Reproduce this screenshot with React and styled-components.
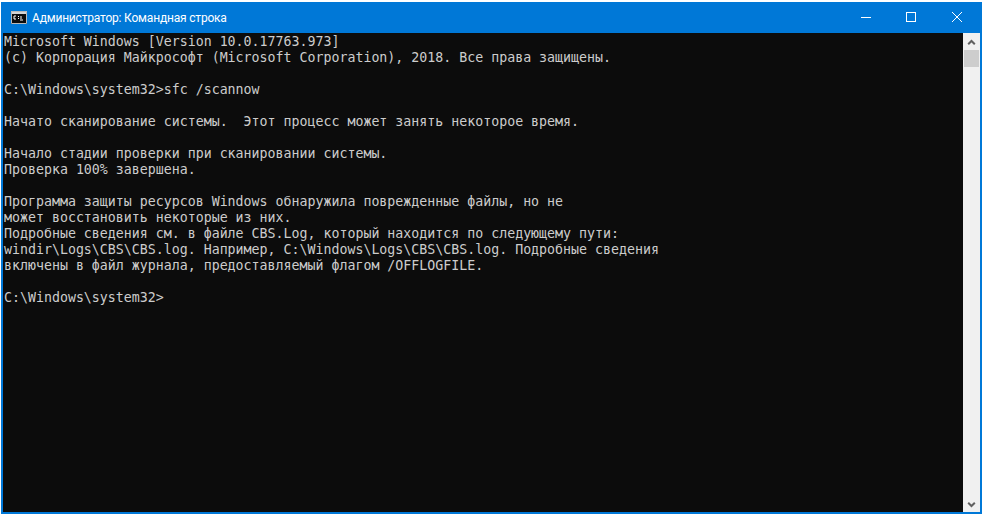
import React from 'react';
import styled, { createGlobalStyle } from 'styled-components';

const GlobalStyle = createGlobalStyle`
  html, body {
    margin: 0;
    padding: 0;
    width: 983px;
    height: 516px;
    overflow: hidden;
    background: #ffffff;
  }
`;

const Page = styled.div`
  width: 983px;
  height: 516px;
  padding: 2px 1px;
  box-sizing: border-box;
  background: #ffffff;
`;

const Window = styled.div`
  height: 100%;
  display: flex;
  flex-direction: column;
  border: 2px solid #0078d7;
  border-top: none;
  box-sizing: border-box;
`;

const TitleBar = styled.div`
  height: 31px;
  flex: none;
  display: flex;
  align-items: center;
  background: #0078d7;
`;

const AppIcon = styled.svg`
  width: 16px;
  height: 13px;
  margin-left: 8px;
  flex: none;
`;

const Title = styled.div`
  margin-left: 5px;
  flex: 1;
  color: #ffffff;
  font: 12px Roboto, "Noto Sans", sans-serif;
  letter-spacing: -0.19px;
`;

const CaptionButton = styled.div`
  width: 46px;
  height: 31px;
  box-sizing: border-box;
  padding: 0 0 1px ${(p) => p.$nudge || 0}px;
  display: flex;
  align-items: center;
  justify-content: center;
`;

const Body = styled.div`
  flex: 1;
  min-height: 0;
  display: flex;
`;

const Console = styled.pre`
  flex: 1;
  margin: 0;
  padding: 1px 0 0 1px;
  background: #0c0c0c;
  color: #cccccc;
  font-family: "DejaVu Sans Mono", monospace;
  font-size: 13.28px;
  line-height: 16px;
  overflow: hidden;
`;

const ScrollBar = styled.div`
  width: 17px;
  flex: none;
  display: flex;
  flex-direction: column;
  background: #f0f0f0;
`;

const ScrollArrow = styled.div`
  height: 17px;
  flex: none;
  box-sizing: border-box;
  padding-top: ${(p) => (p.$down ? 3 : 0)}px;
  display: flex;
  align-items: center;
  justify-content: center;
`;

const ScrollThumb = styled.div`
  height: 17px;
  flex: none;
  margin: 0 1px;
  background: #cdcdcd;
`;

const ScrollTrack = styled.div`
  flex: 1;
`;

const output = `Microsoft Windows [Version 10.0.17763.973]
(c) Корпорация Майкрософт (Microsoft Corporation), 2018. Все права защищены.

C:\\Windows\\system32>sfc /scannow

Начато сканирование системы.  Этот процесс может занять некоторое время.

Начало стадии проверки при сканировании системы.
Проверка 100% завершена.

Программа защиты ресурсов Windows обнаружила поврежденные файлы, но не
может восстановить некоторые из них.
Подробные сведения см. в файле CBS.Log, который находится по следующему пути:
windir\\Logs\\CBS\\CBS.log. Например, C:\\Windows\\Logs\\CBS\\CBS.log. Подробные сведения
включены в файл журнала, предоставляемый флагом /OFFLOGFILE.

C:\\Windows\\system32>`;

const ConsoleIcon = () => (
  <AppIcon viewBox="0 0 16 13">
    <rect x="0" y="0" width="16" height="13" fill="#0c0c0c" />
    <rect x="0" y="0" width="16" height="3" fill="#d4d4d4" />
    <path d="M0.5 0.5h15v12h-15z" fill="none" stroke="#b8b8b8" />
    <path d="M5 5H3v3h2M7 5.5h1M7 7.5h1M9 9h3M10 5v3" fill="none" stroke="#ffffff" />
  </AppIcon>
);

export default function App() {
  return (
    <Page>
      <GlobalStyle />
      <Window>
        <TitleBar>
          <ConsoleIcon />
          <Title>Администратор: Командная строка</Title>
          <CaptionButton $nudge={2}>
            <svg width="10" height="10" viewBox="0 0 10 10">
              <path d="M0 5.5h10" stroke="#fff" />
            </svg>
          </CaptionButton>
          <CaptionButton>
            <svg width="10" height="10" viewBox="0 0 10 10">
              <rect x="0.5" y="0.5" width="9" height="9" fill="none" stroke="#fff" />
            </svg>
          </CaptionButton>
          <CaptionButton>
            <svg width="10" height="10" viewBox="0 0 10 10">
              <path d="M0 0l10 10M10 0L0 10" stroke="#fff" />
            </svg>
          </CaptionButton>
        </TitleBar>
        <Body>
          <Console>{output}</Console>
          <ScrollBar>
            <ScrollArrow>
              <svg width="9" height="6" viewBox="0 0 9 6">
                <path d="M1.2 5.3L4.5 2l3.3 3.3" fill="none" stroke="#606060" strokeWidth="2" />
              </svg>
            </ScrollArrow>
            <ScrollThumb />
            <ScrollTrack />
            <ScrollArrow $down>
              <svg width="9" height="6" viewBox="0 0 9 6">
                <path d="M1.2 0.7L4.5 4l3.3-3.3" fill="none" stroke="#606060" strokeWidth="2" />
              </svg>
            </ScrollArrow>
          </ScrollBar>
        </Body>
      </Window>
    </Page>
  );
}
